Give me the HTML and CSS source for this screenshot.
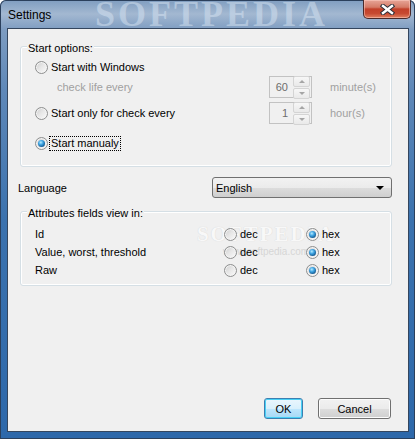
FILE: index.html
```html
<!DOCTYPE html>
<html lang="en">

<head>
  <meta charset="UTF-8">
  <title>Settings</title>
  <link rel="stylesheet" href="styles.css">
</head>

<body>
  <div class="window">
    <div class="titlebar">
      <span class="title">Settings</span>
      <span class="watermark">SOFTPEDIA</span>
      <div class="close">
        <svg width="15" height="11" viewBox="0 0 15 11">
          <path d="M3 2 L12 9 M12 2 L3 9" stroke="#2d2f38" stroke-width="4.4" stroke-linecap="square" fill="none"/>
          <path d="M3 2 L12 9 M12 2 L3 9" stroke="#fff" stroke-width="2.4" stroke-linecap="square" fill="none"/>
        </svg>
      </div>
    </div>

    <div class="client">
      <div class="group start-group">
        <span class="legend">Start options:</span>

        <div class="row row-a">
          <span class="radio"></span>
          <span>Start with Windows</span>
        </div>

        <div class="row spin-row">
          <span class="sub disabled">check life every</span>
          <div class="spin">
            <span class="spin-value">60</span>
            <div class="spin-buttons">
              <span class="spin-btn"><i class="arrow up"></i></span>
              <span class="spin-btn"><i class="arrow down"></i></span>
            </div>
          </div>
          <span class="disabled">minute(s)</span>
        </div>

        <div class="row spin-row row-c">
          <span class="choice"><span class="radio"></span><span>Start only for check every</span></span>
          <div class="spin">
            <span class="spin-value">1</span>
            <div class="spin-buttons">
              <span class="spin-btn"><i class="arrow up"></i></span>
              <span class="spin-btn"><i class="arrow down"></i></span>
            </div>
          </div>
          <span class="disabled">hour(s)</span>
        </div>

        <div class="row row-d">
          <span class="radio checked"></span>
          <span class="focused">Start manualy</span>
        </div>
      </div>

      <div class="language-row">
        <span>Language</span>
        <div class="combo">
          <span>English</span>
          <i class="combo-arrow"></i>
        </div>
      </div>

      <div class="group attr-group">
        <span class="legend">Attributes fields view in:</span>

        <div class="mark">
          <span class="mark-big">SOFTPEDIA</span>
          <span class="mark-url">www.softpedia.com</span>
        </div>

        <div class="attr-row">
          <span>Id</span>
          <span class="choice"><span class="radio"></span>dec</span>
          <span class="choice"><span class="radio checked"></span>hex</span>
        </div>
        <div class="attr-row">
          <span>Value, worst, threshold</span>
          <span class="choice"><span class="radio"></span>dec</span>
          <span class="choice"><span class="radio checked"></span>hex</span>
        </div>
        <div class="attr-row">
          <span>Raw</span>
          <span class="choice"><span class="radio"></span>dec</span>
          <span class="choice"><span class="radio checked"></span>hex</span>
        </div>
      </div>

      <div class="buttons">
        <button class="btn btn-default">OK</button>
        <button class="btn">Cancel</button>
      </div>
    </div>
  </div>
</body>

</html>
```

FILE: styles.css
```css
body {
  margin: 0;
  padding: 0;
  font-family: "Liberation Sans", Arial, sans-serif;
  font-size: 11px;
  color: #000;
}

.window {
  width: 415px;
  height: 439px;
  box-sizing: border-box;
  padding: 0 6px 7px 7px;
  display: flex;
  flex-direction: column;
  border-radius: 6px 6px 0 0;
  background: linear-gradient(to bottom, #7f9dc0 0, #a3b8d1 14px, #7d9cc1 30px, #5f88b8 90px, #3b72ae 220px, #2d68aa 100%);
  box-shadow: inset 0 0 0 1px #2b405c;
  overflow: hidden;
}

/* title bar */
.titlebar {
  position: relative;
  height: 28px;
  display: flex;
  align-items: flex-start;
}

.title {
  margin: 7px 0 0 1px;
  font-size: 12px;
  line-height: 16px;
  color: #000;
  position: relative;
  z-index: 1;
}

.watermark {
  position: absolute;
  left: 88px;
  top: -6px;
  font-family: "Liberation Serif", serif;
  font-weight: bold;
  font-size: 36px;
  line-height: 40px;
  letter-spacing: 3px;
  color: rgba(215, 228, 242, 0.5);
}

.close {
  position: relative;
  margin-left: auto;
  margin-right: -2px;
  width: 48px;
  height: 19px;
  box-sizing: border-box;
  border: 1px solid #4a2a2a;
  border-top: none;
  border-radius: 0 0 5px 5px;
  background: linear-gradient(to bottom, #e7a597 0, #d57b67 40%, #c24029 50%, #c74a31 75%, #e08060 100%);
  box-shadow: inset 0 0 0 1px rgba(255, 210, 200, 0.5);
  display: flex;
  align-items: center;
  justify-content: center;
}

/* client area */
.client {
  flex: 1;
  background-color: #f0f0f0;
  border: 1px solid #34465e;
  display: flex;
  flex-direction: column;
}

.group {
  position: relative;
  border: 1px solid #d5dfe5;
  border-radius: 3px;
  box-shadow: inset 0 0 0 1px #fff;
  padding-left: 14px;
}

.legend {
  position: absolute;
  left: 6px;
  top: -6px;
  padding: 0 1px;
  line-height: 14px;
  background-color: #f0f0f0;
}

.start-group {
  margin: 17px 16px 0 12px;
  padding-top: 11px;
  padding-bottom: 14px;
}

.row {
  display: flex;
  align-items: center;
}

.row-a {
  height: 18px;
}

.spin-row {
  display: grid;
  grid-template-columns: 216px 43px auto;
  column-gap: 18px;
  align-items: center;
  height: 22px;
}

.row-c {
  margin-top: 4px;
}

.row-d {
  height: 17px;
  margin-top: 11px;
}

.choice {
  display: flex;
  align-items: center;
}

.sub {
  padding-left: 22px;
}

.disabled {
  color: #a0a0a0;
}

.focused {
  border: 1px dotted #000;
  padding: 0 1px;
  line-height: 13px;
  margin-left: -2px;
}

/* radio buttons */
.radio {
  position: relative;
  flex: none;
  width: 13px;
  height: 13px;
  box-sizing: border-box;
  margin-right: 3px;
  border-radius: 50%;
  border: 1px solid #8e8f8f;
  background: linear-gradient(135deg, #cdcdcd 0, #e6e6e6 45%, #fbfbfb 100%);
  box-shadow: inset 0 0 0 1px #f4f4f4;
}

.radio.checked::after {
  content: "";
  position: absolute;
  left: 2px;
  top: 2px;
  width: 7px;
  height: 7px;
  border-radius: 50%;
  background: radial-gradient(circle at 40% 35%, #b6ecff 0, #41a6e4 35%, #125a92 75%, #0b3d66 100%);
}

/* spinners */
.spin {
  display: flex;
  align-items: center;
  box-sizing: border-box;
  height: 22px;
  border: 1px solid #c2c2c2;
  background-color: #f0f0f0;
}

.spin-value {
  flex: 1;
  text-align: right;
  padding-right: 5px;
  color: #6d6d6d;
}

.spin-buttons {
  display: flex;
  flex-direction: column;
  gap: 1px;
  margin-right: 1px;
}

.spin-btn {
  display: flex;
  align-items: center;
  justify-content: center;
  width: 15px;
  height: 9px;
  border: 1px solid #d4d4d4;
  border-radius: 2px;
  background: linear-gradient(to bottom, #f7f7f7, #e9e9e9);
}

.arrow {
  width: 0;
  height: 0;
  border-left: 3px solid transparent;
  border-right: 3px solid transparent;
}

.arrow.up {
  border-bottom: 3px solid #a5a5a5;
}

.arrow.down {
  border-top: 3px solid #a5a5a5;
}

/* language */
.language-row {
  display: flex;
  align-items: center;
  justify-content: space-between;
  margin: 10px 16px 0 10px;
  height: 21px;
}

.combo {
  position: relative;
  display: flex;
  align-items: center;
  box-sizing: border-box;
  width: 180px;
  height: 21px;
  padding-left: 3px;
  border: 1px solid #707070;
  border-radius: 3px;
  background: linear-gradient(to bottom, #f2f2f2 0, #ebebeb 50%, #dddddd 51%, #cfcfcf 100%);
}

.combo-arrow {
  position: absolute;
  right: 7px;
  top: 8px;
  width: 0;
  height: 0;
  border-left: 4px solid transparent;
  border-right: 4px solid transparent;
  border-top: 4px solid #000;
}

/* attributes */
.attr-group {
  margin: 13px 16px 0 12px;
  padding-top: 13px;
  padding-bottom: 6px;
}

.attr-row {
  position: relative;
  display: grid;
  grid-template-columns: 189px 82px auto;
  align-items: center;
  height: 18px;
}

.mark {
  position: absolute;
  left: 180px;
  top: 10px;
  width: 130px;
  display: flex;
  flex-direction: column;
  align-items: center;
  pointer-events: none;
}

.mark-big {
  font-family: "Liberation Serif", serif;
  font-weight: bold;
  font-size: 21px;
  line-height: 24px;
  letter-spacing: 2px;
  color: #f8f8f8;
  text-shadow: 0 0 1px #cfcfcf;
}

.mark-url {
  margin-top: 0;
  font-size: 10px;
  line-height: 12px;
  color: #d6d6d6;
}

/* buttons */
.buttons {
  margin-top: auto;
  display: flex;
  justify-content: flex-end;
  gap: 15px;
  padding: 0 17px 12px 0;
}

.btn {
  height: 21px;
  width: 73px;
  padding: 0;
  font-family: "Liberation Sans", Arial, sans-serif;
  font-size: 11px;
  color: #000;
  border: 1px solid #707070;
  border-radius: 3px;
  background: linear-gradient(to bottom, #f2f2f2 0, #ebebeb 50%, #dddddd 51%, #cfcfcf 100%);
  box-shadow: inset 0 0 0 1px #fcfcfc;
}

.btn-default {
  width: 39px;
  border-color: #3c7fb1;
  background: linear-gradient(to bottom, #eaf6fd 0, #d9f0fc 50%, #bee6fd 51%, #a7d9f5 100%);
  box-shadow: inset 0 0 0 1px #48d0f5;
}
```
